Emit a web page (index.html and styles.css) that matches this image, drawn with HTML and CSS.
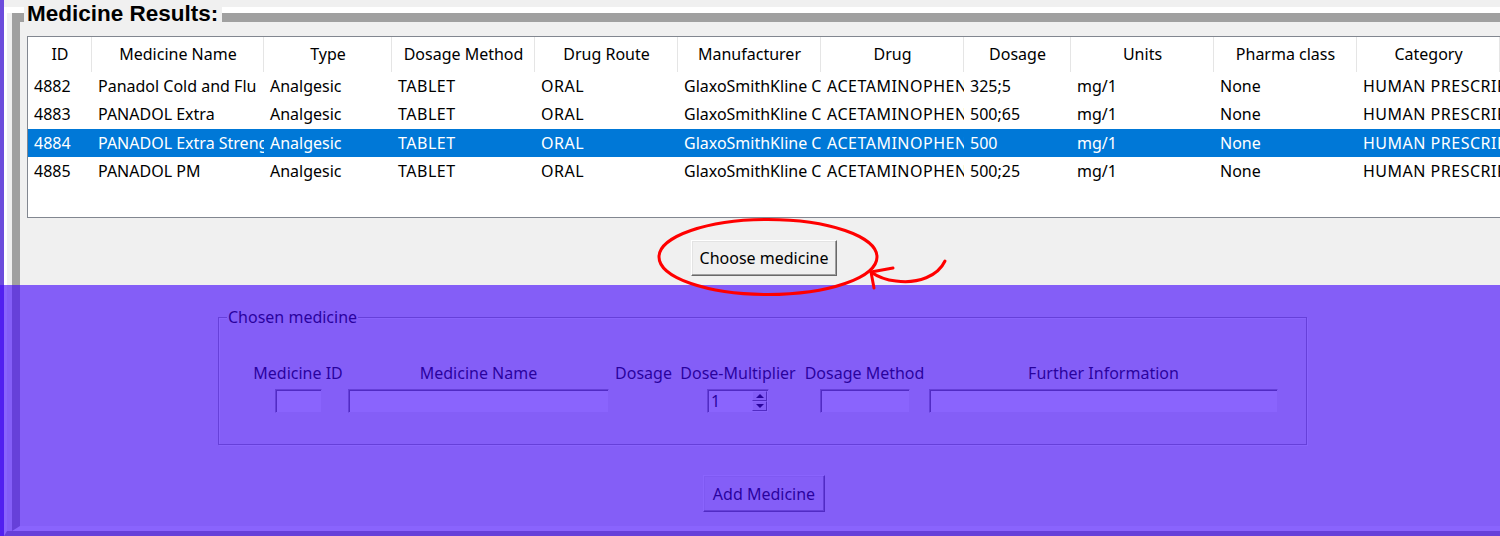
FILE: index.html
```html
<!DOCTYPE html>
<html>
<head>
<meta charset="utf-8">
<title>Medicine Results</title>
<link rel="stylesheet" href="styles.css">
</head>
<body>
<div class="app">
  <div class="strip"></div>
  <div class="window">
    <div class="ridge-outer">
      <div class="ridge-inner">
        <div class="content">
          <div class="rf-title">Medicine Results:</div>
          <div class="tree">
            <div class="row head">
              <div>ID</div><div>Medicine Name</div><div>Type</div><div>Dosage Method</div><div>Drug Route</div><div>Manufacturer</div><div>Drug</div><div>Dosage</div><div>Units</div><div>Pharma class</div><div>Category</div>
            </div>
            <div class="row">
              <div>4882</div><div>Panadol Cold and Flu</div><div>Analgesic</div><div class="caps">TABLET</div><div class="caps">ORAL</div><div>GlaxoSmithKline Consumer Healthcare</div><div class="caps">ACETAMINOPHEN; PHENYLEPHRINE</div><div>325;5</div><div>mg/1</div><div>None</div><div class="caps">HUMAN PRESCRIPTION DRUG</div>
            </div>
            <div class="row tall">
              <div>4883</div><div>PANADOL Extra</div><div>Analgesic</div><div class="caps">TABLET</div><div class="caps">ORAL</div><div>GlaxoSmithKline Consumer Healthcare</div><div class="caps">ACETAMINOPHEN; CAFFEINE</div><div>500;65</div><div>mg/1</div><div>None</div><div class="caps">HUMAN PRESCRIPTION DRUG</div>
            </div>
            <div class="row sel">
              <div>4884</div><div>PANADOL Extra Strength</div><div>Analgesic</div><div class="caps">TABLET</div><div class="caps">ORAL</div><div>GlaxoSmithKline Consumer Healthcare</div><div class="caps">ACETAMINOPHEN</div><div>500</div><div>mg/1</div><div>None</div><div class="caps">HUMAN PRESCRIPTION DRUG</div>
            </div>
            <div class="row">
              <div>4885</div><div>PANADOL PM</div><div>Analgesic</div><div class="caps">TABLET</div><div class="caps">ORAL</div><div>GlaxoSmithKline Consumer Healthcare</div><div class="caps">ACETAMINOPHEN; DIPHENHYDRAMINE</div><div>500;25</div><div>mg/1</div><div>None</div><div class="caps">HUMAN PRESCRIPTION DRUG</div>
            </div>
          </div>
          <div class="btn-row choose-row"><button class="btn choose">Choose medicine</button></div>
          <div class="chosen">
            <div class="chosen-title">Chosen medicine</div>
            <div class="fields">
              <div class="lbl">Medicine ID</div>
              <div class="lbl">Medicine Name</div>
              <div class="lbl">Dosage</div>
              <div class="lbl">Dose-Multiplier</div>
              <div class="lbl">Dosage Method</div>
              <div class="lbl">Further Information</div>
              <div class="entry e-id"></div>
              <div class="entry e-name"></div>
              <div></div>
              <div class="entry spin"><span class="spin-val">1</span><span class="spin-btns"><span class="sb up"></span><span class="sb down"></span></span></div>
              <div class="entry e-method"></div>
              <div class="entry e-info"></div>
            </div>
          </div>
          <div class="btn-row add-row"><button class="btn add">Add Medicine</button></div>
        </div>
      </div>
    </div>
  </div>
</div>
<div class="overlay"></div>
<svg class="annot" width="1500" height="536" viewBox="0 0 1500 536">
  <ellipse cx="768" cy="257" rx="109" ry="37.5" fill="none" stroke="#ff0000" stroke-width="3"/>
  <path d="M945 261 C938 276 918 284 896 281 C886 280 878 277 871 272 M871 272 L893 268 M871 272 L874 288" fill="none" stroke="#ff0000" stroke-width="3" stroke-linecap="round" stroke-linejoin="round"/>
</svg>
</body>
</html>
```

FILE: styles.css
```css
* { box-sizing: border-box; }
html, body { margin: 0; padding: 0; }
body {
  width: 1500px;
  height: 536px;
  overflow: hidden;
  position: relative;
  background: #f0f0f0;
  font-family: "Noto Sans", "Open Sans", sans-serif;
  font-size: 16px;
  color: #000;
}
.app { display: flex; height: 536px; }
.strip { width: 4px; flex: none; background: #6c4cdc; }
.window { flex: none; padding-top: 7px; background: #f0f0f0; }
.ridge-outer {
  border-top: 6px solid #fff;
  border-left: 3px solid #fff;
  border-bottom: 5px solid #a0a0a0;
  padding-left: 5px;
}
.ridge-inner {
  border-top: 9px solid #a0a0a0;
  border-left: 8px solid #a0a0a0;
  border-bottom: 5px solid #fff;
}
.content { width: 1488px; padding: 0 7px 14px; }

.rf-title {
  width: fit-content;
  height: 24px;
  margin: -20px 0 -4px -3px;
  padding: 0 4px 0 3px;
  background: #f0f0f0;
  font: bold 22.5px/24px "Liberation Sans", Arial, sans-serif;
  white-space: nowrap;
}

.tree {
  margin-top: 14px;
  height: 182px;
  border: 1px solid #828790;
  background: #fff;
  overflow: hidden;
}
.row {
  display: grid;
  grid-template-columns: 64px 172px 128px 143px 143px 143px 143px 107px 143px 143px 143px;
  height: 28px;
  line-height: 28px;
}
.row.tall { height: 29px; line-height: 29px; }
.row > div {
  padding-left: 6px;
  white-space: nowrap;
  overflow: hidden;
}
.row > .caps { letter-spacing: 0.5px; }
.row.head { height: 35px; line-height: 35px; }
.row.head > div {
  padding: 0;
  text-align: center;
  box-shadow: inset -1px 0 #e5e5e5;
}
.row.sel { background: #0078d7; color: #fff; }

.btn-row { display: flex; justify-content: center; }
.choose-row { margin-top: 22px; }
.add-row { margin-top: 30px; }
.btn {
  font-family: "Noto Sans", "Open Sans", sans-serif;
  font-size: 16px;
  line-height: 20px;
  color: #000;
  background: #f0f0f0;
  border: 1px solid;
  border-color: #fff #696969 #696969 #fff;
  box-shadow: inset -1px -1px #a0a0a0, inset 1px 1px #e3e3e3;
  padding: 0;
}
.choose { width: 146px; height: 36px; }
.add { width: 122px; height: 37px; }

.chosen {
  margin: 41px 0 0 191px;
  width: 1089px;
  height: 128px;
  border: 1px solid #a0a0a0;
  box-shadow: inset 1px 1px #fff, 1px 1px #fff;
}
.chosen-title {
  width: fit-content;
  height: 18px;
  margin: -10px 0 0 8px;
  padding: 0 1px;
  line-height: 18px;
  background: #f0f0f0;
}
.fields {
  display: grid;
  grid-template-columns: 92px 269px 61px 128px 125px 353px;
  grid-template-rows: 20px 24px;
  row-gap: 6px;
  margin-top: 37px;
  padding-left: 33px;
  justify-items: center;
  align-items: center;
}
.lbl { line-height: 20px; white-space: nowrap; }
.entry {
  height: 24px;
  background: #fff;
  border: 1px solid;
  border-color: #a0a0a0 #f0f0f0 #f0f0f0 #a0a0a0;
  box-shadow: inset 1px 1px #696969;
}
.e-id { width: 47px; }
.e-name { width: 261px; }
.e-method { width: 90px; }
.e-info { width: 349px; }
.spin {
  width: 62px;
  display: flex;
  justify-content: space-between;
  align-items: stretch;
  padding: 1px 1px 1px 3px;
}
.spin-val { line-height: 20px; }
.spin-btns { display: flex; flex-direction: column; width: 15px; }
.sb {
  flex: 1;
  display: flex;
  align-items: center;
  justify-content: center;
  background: #f0f0f0;
  border: 1px solid;
  border-color: #fff #696969 #696969 #fff;
}
.sb.up::before {
  content: "";
  border-left: 4px solid transparent;
  border-right: 4px solid transparent;
  border-bottom: 4px solid #000;
}
.sb.down::before {
  content: "";
  border-left: 4px solid transparent;
  border-right: 4px solid transparent;
  border-top: 4px solid #000;
}

.overlay {
  position: absolute;
  left: 0;
  top: 285px;
  width: 1500px;
  height: 251px;
  background: rgba(66, 5, 251, 0.62);
}
.annot { position: absolute; left: 0; top: 0; pointer-events: none; }
```
